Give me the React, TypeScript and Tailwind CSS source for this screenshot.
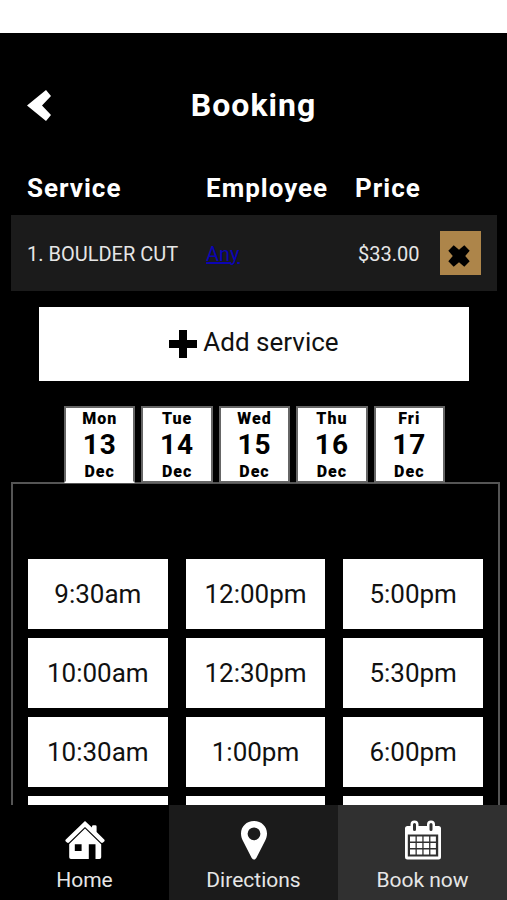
const days = [
  { day: "Mon", date: 13, month: "Dec" },
  { day: "Tue", date: 14, month: "Dec" },
  { day: "Wed", date: 15, month: "Dec" },
  { day: "Thu", date: 16, month: "Dec" },
  { day: "Fri", date: 17, month: "Dec" },
];

const slots = [
  "9:30am", "12:00pm", "5:00pm",
  "10:00am", "12:30pm", "5:30pm",
  "10:30am", "1:00pm", "6:00pm",
];

function BackIcon() {
  return (
    <svg viewBox="0 0 24 31" className="h-[31px] w-6" fill="currentColor" aria-hidden="true">
      <path d="M19 0 24 6 15 15.500 24 25 19 31 0 15.500Z" />
    </svg>
  );
}

function CrossIcon() {
  return (
    <svg viewBox="0 0 22 22" className="h-[22px] w-[22px]" fill="currentColor" aria-hidden="true">
      <path d="M5.700.3 11 4.800 16.300.3 21.700 5.700 17.200 11 21.700 16.300 16.300 21.700 11 17.200 5.700 21.700.3 16.300 4.800 11 .3 5.700Z" />
    </svg>
  );
}

function PlusIcon() {
  return (
    <svg viewBox="0 0 28 28" className="h-7 w-7" fill="currentColor" aria-hidden="true">
      <path d="M10 0h8v10h10v8H18v10h-8V18H0v-8h10Z" />
    </svg>
  );
}

function HomeIcon() {
  return (
    <svg viewBox="0 0 40 40" className="h-10 w-10" fill="currentColor" aria-hidden="true">
      <path d="M20 1 27 7.500V6.500q0-1.300 1.300-1.300h2q1.300 0 1.300 1.300v5.500l7.600 7.500q.9.900 0 1.900l-1.200 1.200q-1 .9-2 0L20 7 4 22.600q-1 .9-2 0L.8 21.400q-.9-1 0-1.900Z" />
      <path fillRule="evenodd" d="M20 8.500 36.200 24.200V37.200q0 1.700-1.700 1.700H30.500V24.200h-6.700v14.700H6Q4.200 38.900 4.200 37.200V24ZM9.800 24.200v6.800h6.800v-6.800Z" />
    </svg>
  );
}

function PinIcon() {
  return (
    <svg viewBox="0 0 26 40" className="h-10 w-[26px]" fill="currentColor" aria-hidden="true">
      <path fillRule="evenodd" d="M13 1C5.500 1 0 6.500 0 13.500c0 3 .8 5 2 7.500l8.700 17q2.300 3.200 4.600 0L24 21c1.200-2.500 2-4.500 2-7.500C26 6.500 20.500 1 13 1Zm0 6.400a6.400 6.400 0 1 1 0 12.800 6.400 6.400 0 0 1 0-12.800Z" />
    </svg>
  );
}

function CalendarIcon() {
  return (
    <svg viewBox="0 0 36 40" className="h-10 w-9" aria-hidden="true">
      <path
        fill="currentColor"
        fillRule="evenodd"
        d="M2.500 6H5.500V4.500a4 4 0 0 1 8 0V6h8.500V4.500a4 4 0 0 1 8 0V6H33.500Q36 6 36 8.500V37q0 2.500-2.500 2.500h-31Q0 39.500 0 37V8.500Q0 6 2.500 6ZM8 4.500v5a1.500 1.500 0 0 0 3 0v-5a1.500 1.500 0 0 0-3 0Zm16.500 0v5a1.500 1.500 0 0 0 3 0v-5a1.500 1.500 0 0 0-3 0ZM2.800 14.500v22h30.400v-22Z"
      />
      <g fill="currentColor">
        {[16.500, 23, 29.500].map((y) =>
          [5, 11.800, 18.600, 25.400].map((x) => (
            <rect key={`${x}-${y}`} x={x} y={y} width="5.500" height="5" />
          )),
        )}
      </g>
    </svg>
  );
}

export default function App() {
  return (
    <div className="flex h-screen flex-col bg-black font-['Roboto',sans-serif] text-white">
      <div className="h-[33px] shrink-0 bg-white" />

      <main className="min-h-0 flex-1 overflow-y-auto [scrollbar-width:none]">
        <header className="mt-[47px] grid h-[50px] grid-cols-[1fr_auto_1fr] items-center px-[27px]">
          <button type="button" aria-label="Back" className="justify-self-start">
            <BackIcon />
          </button>
          <h1 className="text-[32px] leading-[50px] font-bold tracking-[1px]">Booking</h1>
        </header>

        <div className="mt-[31px] pr-[10px] pl-[11px]">
          <table className="w-full table-fixed border-collapse text-left">
            <thead>
              <tr className="h-[54px] text-[26px] font-bold tracking-[1px]">
                <th scope="col" className="w-[187px] pl-4">Service</th>
                <th scope="col" className="w-[149px] pl-2">Employee</th>
                <th scope="col" className="w-[93px] pl-2">Price</th>
                <td />
              </tr>
            </thead>
            <tbody>
              <tr className="h-[76px] bg-[#1b1b1b] text-[20px]">
                <td className="pt-0.5 pl-4 whitespace-nowrap text-[#e6e6e6]">1. BOULDER CUT</td>
                <td className="pt-0.5 pl-2">
                  <a href="#employee" className="text-[#0c04b4] underline">Any</a>
                </td>
                <td className="pt-0.5 pl-[11px] text-[#e6e6e6]">$33.00</td>
                <td>
                  <button
                    type="button"
                    aria-label="Remove service"
                    className="flex h-11 w-[41px] items-center justify-center bg-[#ad854a] pt-1.5 pr-1 text-black"
                  >
                    <CrossIcon />
                  </button>
                </td>
              </tr>
            </tbody>
          </table>
        </div>

        <div className="mt-4 pr-[38px] pl-[39px]">
          <button
            type="button"
            className="flex h-[74px] w-full items-center justify-center gap-1.5 bg-white text-[26px] text-[#111]"
          >
            <span className="text-black">
              <PlusIcon />
            </span>
            <span className="pb-1">Add service</span>
          </button>
        </div>

        <section className="mt-[25px] pr-[7px] pl-[11px]">
          <div role="tablist" aria-label="Date" className="relative z-10 grid grid-cols-5 gap-1.5 pr-[55px] pl-[53px]">
            {days.map(({ day, date, month }, index) => (
              <button
                key={date}
                type="button"
                role="tab"
                aria-selected={index === 0}
                className="flex h-[77px] flex-col items-center border-2 border-[#666] bg-white text-base font-black tracking-[1px] text-black aria-selected:border-b-white"
              >
                <span className="leading-[22px]">{day}</span>
                <span className="text-[28px] leading-[30px] font-bold">{date}</span>
                <span className="leading-[24px]">{month}</span>
              </button>
            ))}
          </div>
          <div
            role="tabpanel"
            aria-label="Available times"
            className="-mt-px grid grid-cols-3 gap-x-[18px] gap-y-[9px] border-2 border-[#555] pt-[75px] pr-[15px] pb-4 pl-[15px]"
          >
            {slots.map((slot) => (
              <button key={slot} type="button" className="h-[70px] bg-white text-[26px] text-[#111]">
                {slot}
              </button>
            ))}
            <div className="h-[70px] bg-white" />
            <div className="h-[70px] bg-white" />
            <div className="h-[70px] bg-white" />
          </div>
        </section>
      </main>

      <nav className="grid h-[95px] shrink-0 grid-cols-3 text-[21px] text-[#e6e6e6]">
        <a href="#home" className="flex flex-col items-center bg-black pt-[15px]">
          <span className="text-white"><HomeIcon /></span>
          <span className="leading-[40px]">Home</span>
        </a>
        <a href="#directions" className="flex flex-col items-center bg-[#1b1b1b] pt-[15px]">
          <span className="text-white"><PinIcon /></span>
          <span className="leading-[40px]">Directions</span>
        </a>
        <a href="#book" className="flex flex-col items-center bg-[#303030] pt-[15px]">
          <span className="text-white"><CalendarIcon /></span>
          <span className="leading-[40px]">Book now</span>
        </a>
      </nav>
    </div>
  );
}
